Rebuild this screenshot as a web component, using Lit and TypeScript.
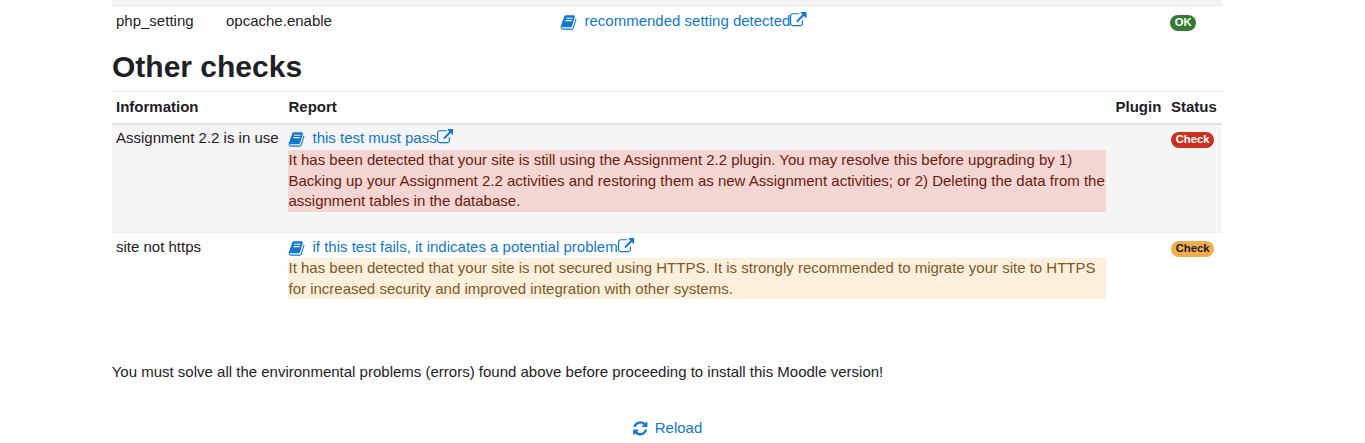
import { LitElement, html, css, svg } from "lit";
import { customElement } from "lit/decorators.js";

const icon = (d: unknown, cls: string) => html`<svg class=${cls} viewBox="0 0 1792 1792" fill="currentColor" aria-hidden="true">${d}</svg>`;
const book = svg`<path d="M1703 478q40 57 18 129l-275 906q-19 64-76.5 107.5t-122.5 43.5h-923q-77 0-148.5-53.5t-99.5-131.5q-24-67-2-127 0-4 3-27t4-37q1-8-3-21.5t-3-19.5q2-11 8-21t16.5-23.5 16.5-23.5q23-38 45-91.5t30-91.5q3-10 .5-30t-.5-28q3-11 17-28t17-23q21-36 42-92t25-90q1-9-2.5-32t.5-28q4-13 22-30.5t22-22.5q19-26 42.5-84.5t27.5-96.5q1-8-3-25.5t-2-26.5q2-8 9-18t18-23 17-21q8-12 16.5-30.5t15-35 16-36 19.5-32 26.5-23.5 36-11.5 47.5 5.5l-1 3q38-9 51-9h761q74 0 114 56t18 130l-274 906q-36 119-71.5 153.5t-128.5 34.5h-869q-27 0-38 15-11 16-1 43 24 70 144 70h923q29 0 56-15.5t35-41.5l300-987q7-22 5-57 38 15 59 43zm-1064 2q-4 13 2 22.5t20 9.5h608q13 0 25.5-9.5t16.5-22.5l21-64q4-13-2-22.5t-20-9.5h-608q-13 0-25.5 9.5t-16.5 22.5zm-83 256q-4 13 2 22.5t20 9.5h608q13 0 25.5-9.5t16.5-22.5l21-64q4-13-2-22.5t-20-9.5h-608q-13 0-25.5 9.5t-16.5 22.5z"/>`;
const ext = svg`<path d="M1408 928v320q0 119-84.5 203.5t-203.5 84.5h-832q-119 0-203.5-84.5t-84.5-203.5v-832q0-119 84.5-203.5t203.5-84.5h704q14 0 23 9t9 23v64q0 14-9 23t-23 9h-704q-66 0-113 47t-47 113v832q0 66 47 113t113 47h832q66 0 113-47t47-113v-320q0-14 9-23t23-9h64q14 0 23 9t9 23zm384-864v512q0 26-19 45t-45 19-45-19l-176-176-652 652q-10 10-23 10t-23-10l-114-114q-10-10-10-23t10-23l652-652-176-176q-19-19-19-45t19-45 45-19h512q26 0 45 19t19 45z"/>`;
const refresh = svg`<path d="M1639 1056q0 5-1 7-64 268-268 434.5t-478 166.5q-146 0-282.5-55t-243.5-157l-129 129q-19 19-45 19t-45-19-19-45v-448q0-26 19-45t45-19h448q26 0 45 19t19 45-19 45l-137 137q71 66 161 102t187 36q134 0 250-65t186-179q11-17 53-117 8-23 30-23h192q13 0 22.5 9.5t9.5 22.5zm25-800v448q0 26-19 45t-45 19h-448q-26 0-45-19t-19-45 19-45l138-138q-148-137-349-137-134 0-250 65t-186 179q-11 17-53 117-8 23-30 23h-199q-13 0-22.5-9.5t-9.5-22.5v-7q65-268 270-434.5t480-166.5q146 0 284 55.5t245 156.5l130-129q19-19 45-19t45 19 19 45z"/>`;

@customElement("app-root")
export class AppRoot extends LitElement {
  static styles = css`
    :host {
      display: block;
      height: 443px;
      overflow: hidden;
      background: #fff;
      color: #1d2125;
      font-family: "Liberation Sans", Arial, sans-serif;
      font-size: 15px;
      line-height: 20.6px;
    }
    .page { width: 1110px; margin-left: 112px; }
    .strip { height: 5px; background: #f5f5f5; border-bottom: 1px solid #e4e6e9; }
    .row { display: grid; align-items: start; }
    .top { grid-template-columns: 110px 334.5px 609.5px 1fr; height: 35px; padding: 5px 0 0 4px; box-sizing: border-box; }
    .grid { grid-template-columns: 172.5px 827px 55.5px 55px; }
    .cell { padding: 4px; min-width: 0; }
    h2 { margin: 7.8px 0 6.2px; font-size: 30px; line-height: 36px; font-weight: 700; }
    .head { border-top: 1px solid #e9ebee; border-bottom: 2px solid #dee2e6; font-weight: 700; height: 31px; }
    .head .cell { padding-top: 5px; white-space: nowrap; }
    .r1 { background: #f5f5f5; height: 107px; border-bottom: 1px solid #e9ebee; }
    .r1 .cell { padding-top: 3px; }
    .r2 { height: 88px; }
    a { color: #1177d1; text-decoration: none; display: block; white-space: nowrap; height: 21px; }
    .r1 a { height: 22px; }
    .book { width: 17px; height: 17px; margin: -4px 7.5px -4px -0.5px; vertical-align: -1.3px; }
    .ext { width: 16.5px; height: 16.5px; margin: -4px 0; vertical-align: 1.6px; }
    .msg { width: 817.5px; margin-left: -0.5px; padding-left: 0.5px; }
    .danger { background: #f4d6d2; color: #6e1a11; }
    .warning { background: #fcefdc; color: #7d5a29; }
    .badge {
      display: inline-block;
      font-size: 11.25px;
      line-height: 11px;
      font-weight: 700;
      padding: 2px 4.7px 3px;
      border-radius: 8px;
      color: #fff;
      margin-top: 0.5px;
    }
    .ok { background: #357a32; }
    .red { background: #ca3120; }
    .amber { background: #f0ad4e; color: #1d2125; }
    .note { margin: 41.5px 0 0 -0.3px; }
    .reload { display: flex; justify-content: center; margin-top: 35.4px; }
    .refresh { width: 16.6px; height: 16.6px; }
    .reload a { display: flex; align-items: center; gap: 6.4px; height: 20.6px; }
  `;

  render() {
    return html`
      <div class="page">
        <div class="strip"></div>
        <div class="row top">
          <div>php_setting</div>
          <div>opcache.enable</div>
          <div><a href="#">${icon(book, "book")}recommended setting detected${icon(ext, "ext")}</a></div>
          <div><span class="badge ok">OK</span></div>
        </div>
        <h2>Other checks</h2>
        <div class="row grid head">
          <div class="cell">Information</div>
          <div class="cell">Report</div>
          <div class="cell">Plugin</div>
          <div class="cell">Status</div>
        </div>
        <div class="row grid r1">
          <div class="cell">Assignment 2.2 is in use</div>
          <div class="cell">
            <a href="#">${icon(book, "book")}this test must pass${icon(ext, "ext")}</a>
            <div class="msg danger">It has been detected that your site is still using the Assignment 2.2 plugin. You may resolve this before upgrading by 1) Backing up your Assignment 2.2 activities and restoring them as new Assignment activities; or 2) Deleting the data from the assignment tables in the database.</div>
          </div>
          <div class="cell"></div>
          <div class="cell"><span class="badge red">Check</span></div>
        </div>
        <div class="row grid r2">
          <div class="cell">site not https</div>
          <div class="cell">
            <a href="#">${icon(book, "book")}if this test fails, it indicates a potential problem${icon(ext, "ext")}</a>
            <div class="msg warning">It has been detected that your site is not secured using HTTPS. It is strongly recommended to migrate your site to HTTPS for increased security and improved integration with other systems.</div>
          </div>
          <div class="cell"></div>
          <div class="cell"><span class="badge amber">Check</span></div>
        </div>
        <p class="note">You must solve all the environmental problems (errors) found above before proceeding to install this Moodle version!</p>
        <div class="reload"><a href="#">${icon(refresh, "refresh")}Reload</a></div>
      </div>
    `;
  }
}
